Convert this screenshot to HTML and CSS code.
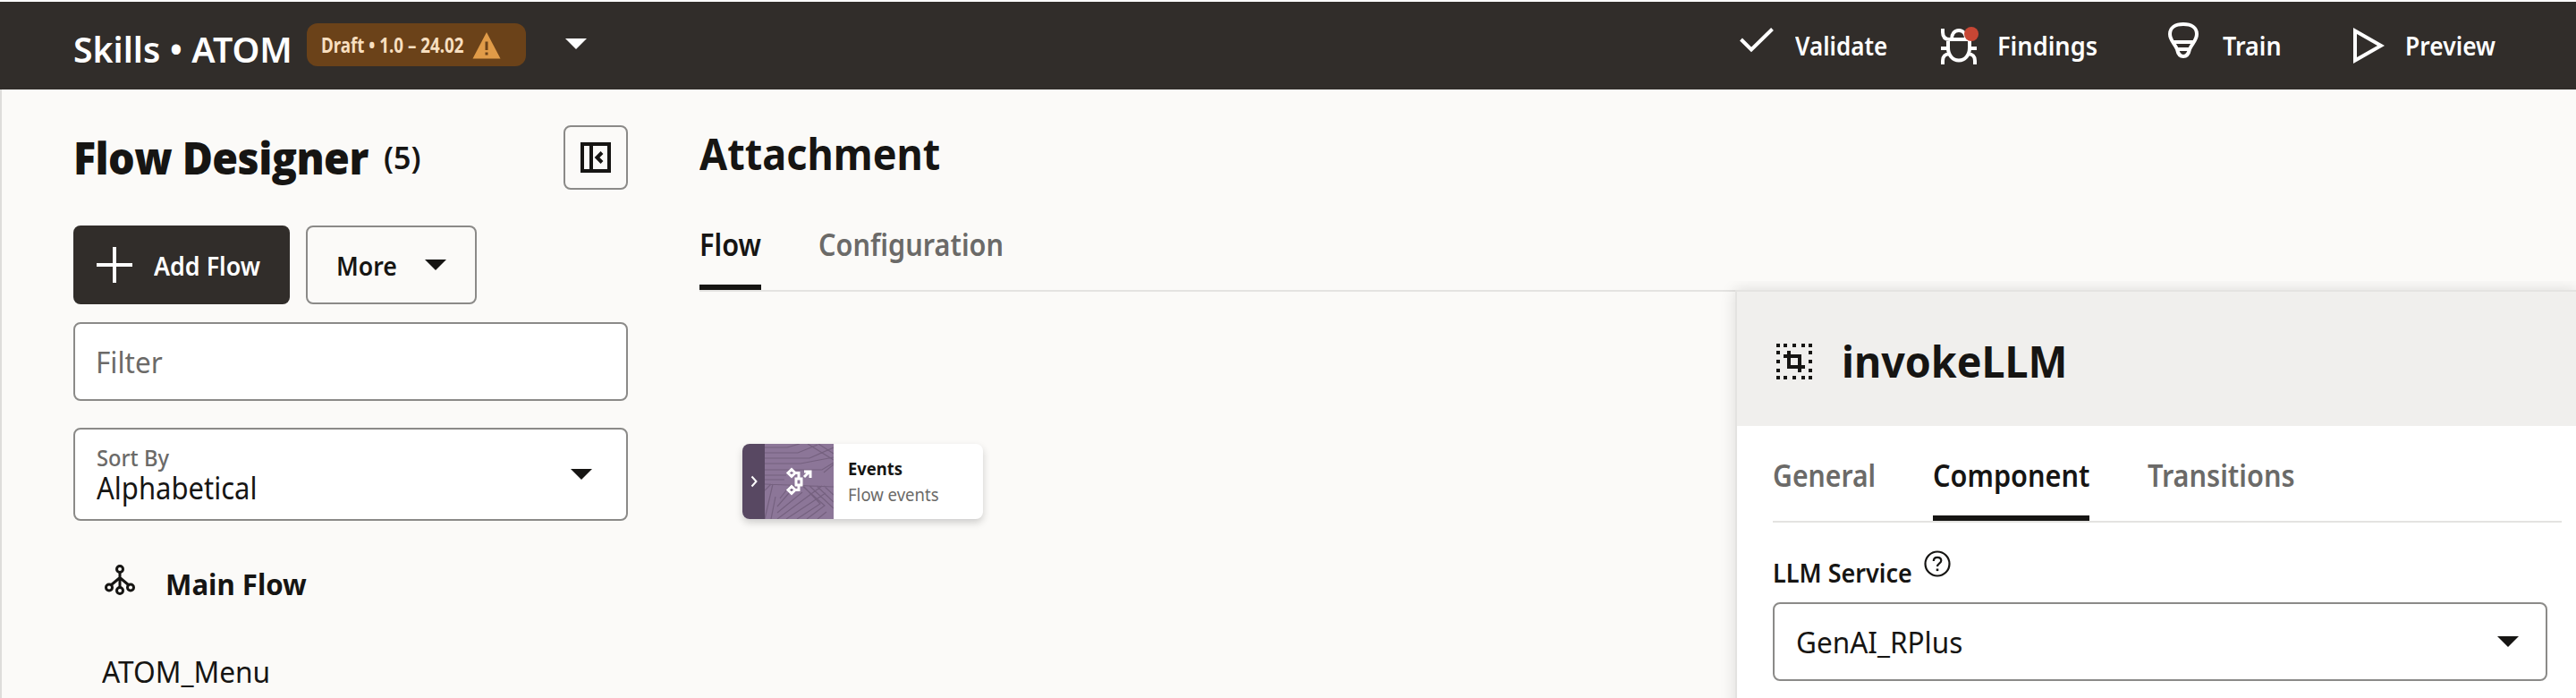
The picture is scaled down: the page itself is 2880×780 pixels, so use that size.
FILE: index.html
```html
<!DOCTYPE html>
<html lang="en">
<head>
<meta charset="utf-8">
<title>Flow Designer</title>
<link rel="stylesheet" href="styles.css">
</head>
<body>
<div class="app">
  <header class="topbar">
    <div class="t topbar-title">Skills • ATOM</div>
    <div class="badge">
      <span class="t badge-text">Draft • 1.0 – 24.02</span>
      <svg class="badge-icon" width="32" height="30" viewBox="0 0 32 30"><path d="M16 0L31.5 29.5H.5z" fill="#e09b48"/><path d="M14.500 10.500h3v9.500h-3zM14.500 22.500h3v3h-3z" fill="#6b4219"/></svg>
    </div>
    <svg class="topbar-caret" width="24" height="12" viewBox="0 0 24 12"><path d="M0 0h24L12 12z" fill="#fff"/></svg>
    <nav class="actions">
      <button class="action action-validate"><svg width="38" height="28" viewBox="0 0 38 28"><path d="M1.500 13L13 24.500L36.500 1.500" fill="none" stroke="#fff" stroke-width="4"/></svg><span class="t">Validate</span></button>
      <button class="action action-findings"><svg width="44" height="44" viewBox="0 0 44 44"><g fill="none" stroke="#fff" stroke-width="4"><path d="M8 14h24v9.500c0 8-5 14-12 14s-12-6-12-14zM12 14c0-6 3-10 8-10s8 4 8 10M2 2v4c0 5 2 8 8 8M0 24h8M32 24h8M2 42v-4c0-5 2-7.500 8-8M38 42v-4c0-5-2-7.500-8-8"/></g><circle cx="34" cy="8" r="8" fill="#c74634"/></svg><span class="t">Findings</span></button>
      <button class="action action-train"><svg width="34" height="40" viewBox="0 0 34 40"><path d="M17 2C8 2 2 6 2 13c0 7 5 10 8 17 1 5 3 8 7 8s6-3 7-8c3-7 8-10 8-17C32 6 26 2 17 2zM6 22h22M10 30h14" fill="none" stroke="#fff" stroke-width="4"/></svg><span class="t">Train</span></button>
      <button class="action action-preview"><svg width="35" height="40" viewBox="0 0 35 40"><path d="M2 3.500v33L31 20z" fill="none" stroke="#fff" stroke-width="4"/></svg><span class="t">Preview</span></button>
    </nav>
  </header>
  <div class="body">
    <aside class="sidebar">
      <div class="side-head">
        <h2 class="t side-title">Flow Designer</h2><span class="t side-count">(5)</span>
        <button class="collapse"><svg width="34" height="34" viewBox="0 0 34 34" fill="none" stroke="#161513"><path d="M2 2h30v30H2zM12 2v30" stroke-width="4"/><path d="M24 11.500L18.500 17l5.500 5.500" stroke-width="4"/></svg></button>
      </div>
      <div class="side-buttons">
        <button class="btn btn-primary"><svg width="40" height="40" viewBox="0 0 40 40"><path d="M20 0v40M0 20h40" stroke="#fff" stroke-width="4"/></svg><span class="t">Add Flow</span></button>
        <button class="btn btn-outline"><span class="t">More</span><svg width="24" height="12" viewBox="0 0 24 12"><path d="M0 0h24L12 12z" fill="#161513"/></svg></button>
      </div>
      <div class="field filter"><span class="t placeholder">Filter</span></div>
      <div class="field sort">
        <div class="sort-text"><span class="t sort-label">Sort By</span><span class="t sort-value">Alphabetical</span></div>
        <svg width="24" height="12" viewBox="0 0 24 12"><path d="M0 0h24L12 12z" fill="#161513"/></svg>
      </div>
      <ul class="flows">
        <li class="flow flow-main"><svg width="34" height="34" viewBox="0 0 34 34" fill="none" stroke="#161513" stroke-width="3"><circle cx="17" cy="5" r="3.500"/><circle cx="5" cy="25.500" r="3.500"/><circle cx="29" cy="25.500" r="3.500"/><circle cx="17" cy="29" r="3.500"/><path d="M17 8.500V25.500M7.500 22.500L17 14.500L26.500 22.500"/></svg><span class="t">Main Flow</span></li>
        <li class="flow flow-item"><span class="t">ATOM_Menu</span></li>
      </ul>
    </aside>
    <main class="main">
      <h1 class="t main-title">Attachment</h1>
      <div class="tabs"><div class="tab tab-flow active"><span class="t">Flow</span></div><div class="tab tab-config"><span class="t">Configuration</span></div></div>
      <div class="workspace">
        <div class="canvas">
          <div class="node">
            <div class="node-strip"><svg width="8" height="14" viewBox="0 0 8 14"><path d="M1.500 1.500L6.500 7l-5 5.500" fill="none" stroke="#fff" stroke-width="2"/></svg></div>
            <svg class="node-art" width="77" height="84" viewBox="0 0 77 84">
              <rect width="77" height="84" fill="#8c7698"/>
              <g fill="none" stroke="#75617f" stroke-width="1.200"><path d="M0 4h25l14-4M0 10h37l22-9M0 16h50l27-12M0 22h40l37-7M0 29h64l13-8M0 35h24M0 40h22M48 0l29 18M60 0l17 11M66 32l11-9M0 45l77 3M0 52l7-7M0 84l9-39M7 84l5-25M14 84l50-37M24 84l44-29M36 84l26-17-18-19M47 84l20-15-25-22M14 70l20-23M14 77l28-23M50 47l27 25M58 47l19 18M66 47l11 10M59 84l10-8M17 61l11-14"/></g>
              <g fill="none" stroke="#fff" stroke-width="3"><path d="M30 28.500l4 4-4 4-4-4zM30 47.500l4 4-4 4-4-4zM35 39h6v7h-6zM34 32.500h4V39M34 51.500h4V46M44 37l6.500-6.500M44 31h7v7"/></g>
            </svg>
            <div class="node-text"><span class="t node-title">Events</span><span class="t node-sub">Flow events</span></div>
          </div>
        </div>
        <section class="panel">
          <div class="panel-head"><svg width="40" height="40" viewBox="0 0 40 40"><path d="M0 0h4v4H0zM8 0h4v4H8zM18 0h4v4h-4zM28 0h4v4h-4zM36 0h4v4h-4zM0 36h4v4H0zM8 36h4v4H8zM18 36h4v4h-4zM28 36h4v4h-4zM36 36h4v4h-4zM0 8h4v4H0zM0 18h4v4H0zM0 28h4v4H0zM36 8h4v4h-4zM36 18h4v4h-4zM36 28h4v4h-4z" fill="#161513"/><path d="M8 14h18v18M14 8v18h18" fill="none" stroke="#161513" stroke-width="4"/></svg><h2 class="t panel-title">invokeLLM</h2></div>
          <div class="panel-tabs"><div class="tab tab-general"><span class="t">General</span></div><div class="tab tab-component active"><span class="t">Component</span></div><div class="tab tab-transitions"><span class="t">Transitions</span></div></div>
          <div class="panel-label"><span class="t">LLM Service</span><svg width="30" height="30" viewBox="0 0 30 30" fill="none" stroke="#161513"><circle cx="15" cy="15" r="13.500" stroke-width="2.200"/><path d="M10.800 12c0-2.500 1.700-4.200 4.200-4.200s4.300 1.500 4.300 3.800c0 3-4.300 3.200-4.300 6.400" stroke-width="2.200"/><path d="M13.700 20.500h2.600v2.600h-2.600z" fill="#161513" stroke="none"/></svg></div>
          <div class="select"><span class="t">GenAI_RPlus</span><svg width="24" height="12" viewBox="0 0 24 12"><path d="M0 0h24L12 12z" fill="#161513"/></svg></div>
        </section>
      </div>
    </main>
  </div>
</div>
</body>
</html>
```
FILE: styles.css
```css
* { box-sizing: border-box; }
body { margin: 0; font-family: "Noto Sans", "Open Sans", sans-serif; color: #161513; }
h1, h2, ul { margin: 0; padding: 0; }
button { border: 0; padding: 0; background: none; font-family: inherit; color: inherit; }
svg { display: block; flex: none; }

/* Text is condensed horizontally by --fit */
.t { white-space: nowrap; display: block; transform: scaleX(var(--fit, 1)); transform-origin: left center; }

.app { width: 2880px; height: 780px; overflow: hidden; display: flex; flex-direction: column; background: #fbfaf8; border-top: 2px solid #fdfdfd; }

.topbar { height: 98px; flex: none; background: #312d2a; display: flex; align-items: center; padding-left: 82px; color: #fff; }
.topbar-title { --fit: .98; font-size: 40px; line-height: 56px; font-weight: 600; padding-top: 7px; width: 261px; }
.badge { width: 245px; height: 48px; border-radius: 12px; background: #6b4219; display: flex; align-items: center; padding-left: 16px; margin-bottom: 2px; }
.badge-text { --fit: .817; width: 169px; font-size: 23px; font-weight: 700; color: #f8dfc0; }
.badge-icon { margin-top: 1px; }
.topbar-caret { margin-left: 44px; margin-bottom: 4px; }
.actions { display: flex; align-items: center; margin-left: 1289px; height: 98px; }
.action { display: flex; align-items: center; font-size: 28px; font-weight: 600; height: 98px; }
.action svg { margin-right: 24px; }
.action-validate { --fit: .93; width: 225px; }
.action-validate svg { margin-bottom: 13px; }
.action-findings { --fit: .97; width: 254px; }
.action-findings svg { margin-right: 19px; margin-top: 2px; }
.action-train { --fit: .96; width: 207px; }
.action-train svg { margin-right: 27px; margin-bottom: 12px; }
.action-preview { --fit: .945; }
.action-preview svg { margin-right: 23px; }

.body { flex: 1; display: flex; border-left: 2px solid #dedddb; }
.sidebar { width: 700px; padding: 40px 0 0 80px; flex: none; }
.side-head { display: flex; align-items: center; height: 72px; }
.side-title { --fit: .952; font-family: "Open Sans", sans-serif; font-size: 49px; letter-spacing: -.6px; font-weight: 800; line-height: 70px; width: 347px; margin-bottom: 1px; }
.side-count { font-size: 34px; font-weight: 600; flex: 1; }
.collapse { width: 72px; height: 72px; border: 2px solid #8b8a88; border-radius: 8px; display: flex; align-items: center; justify-content: center; }
.side-buttons { display: flex; gap: 18px; margin-top: 40px; }
.btn { height: 88px; border-radius: 8px; display: flex; align-items: center; font-size: 29px; font-weight: 600; }
.btn-primary { --fit: .926; width: 242px; background: #312d2a; color: #fff; padding-left: 26px; gap: 24px; }
.btn-outline { --fit: .92; width: 191px; border: 2px solid #8b8a88; padding: 0 32px 0 32px; justify-content: space-between; }
.field { border: 2px solid #8b8a88; border-radius: 8px; background: #fff; display: flex; }
.filter { height: 88px; margin-top: 20px; align-items: center; padding-left: 23px; }
.placeholder { --fit: .94; font-size: 33.500px; color: #6b6a68; }
.sort { height: 104px; margin-top: 30px; padding: 16px 38px 0 24px; justify-content: space-between; }
.sort svg { margin-top: 28px; }
.sort-label { --fit: .95; font-size: 25px; line-height: 30px; font-weight: 500; color: #6b6a68; }
.sort-value { --fit: .912; font-size: 34px; line-height: 39px; }
.flows { list-style: none; margin-top: 21px; }
.flow { --fit: .945; height: 98px; display: flex; align-items: center; font-size: 33.500px; }
.flow-main { padding-left: 35px; font-weight: 700; font-size: 33px; }
.flow-main svg { margin: 0 34px 8px 0; }
.flow-item { padding-left: 32px; }

.main { flex: 1; min-width: 0; padding-top: 40px; display: flex; flex-direction: column; }
.main-title { --fit: .919; font-size: 49px; font-weight: 700; line-height: 62px; margin-left: 80px; height: 88px; }
.tabs { display: flex; margin-left: 80px; border-bottom: 2px solid #e4e3e1; font-size: 33.500px; font-weight: 600; line-height: 90px; height: 98px; }
.tab { --fit: .915; color: #6b6a68; height: 96px; border-bottom: 6px solid transparent; }
.tab.active { color: #161513; border-bottom-color: #161513; }
.tab-flow { width: 69px; margin-right: 64px; }

.workspace { flex: 1; display: flex; }
.canvas { width: 1238px; flex: none; padding: 170px 0 0 128px; }
.node { width: 269px; height: 84px; display: flex; border-radius: 8px; overflow: hidden; background: #fff; box-shadow: 0 4px 8px rgba(0,0,0,.18); }
.node-strip { width: 25px; background: #584862; display: flex; align-items: center; justify-content: center; }
.node-text { padding: 14px 0 0 16px; }
.node-title { --fit: .945; font-size: 19.500px; font-weight: 700; line-height: 28px; }
.node-sub { --fit: .95; font-size: 19.500px; line-height: 29px; color: #6b6a68; }

.panel { flex: 1; margin-top: -2px; background: #fff; border: solid #e4e3e1; border-width: 2px 0 0 2px; box-shadow: 0 0 16px rgba(0,0,0,.13); clip-path: inset(-10px 0 0 -20px); }
.panel-head { height: 150px; background: #f0efed; display: flex; align-items: center; padding: 6px 0 0 44px; }
.panel-head svg { margin-right: 33px; }
.panel-title { --fit: .95; font-size: 49px; font-weight: 700; line-height: 64px; margin-bottom: 2px; }
.panel-tabs { display: flex; margin: 10px 16px 0 40px; font-size: 33.500px; font-weight: 600; line-height: 90px; height: 98px; border-bottom: 2px solid #e4e3e1; }
.tab-general { --fit: .9; width: 116px; margin-right: 63px; }
.tab-component { --fit: .915; width: 175px; margin-right: 65px; }
.panel-label { --fit: .965; height: 89px; display: flex; align-items: flex-start; margin-left: 40px; font-size: 28px; font-weight: 600; line-height: 40px; padding-top: 31px; }
.panel-label .t { width: 169px; padding-top: 5px; }
.select { --fit: .94; height: 88px; margin: 0 32px 0 40px; border: 2px solid #8b8a88; border-radius: 8px; display: flex; align-items: center; justify-content: space-between; padding: 0 30px 0 24px; font-size: 33.500px; }
```
